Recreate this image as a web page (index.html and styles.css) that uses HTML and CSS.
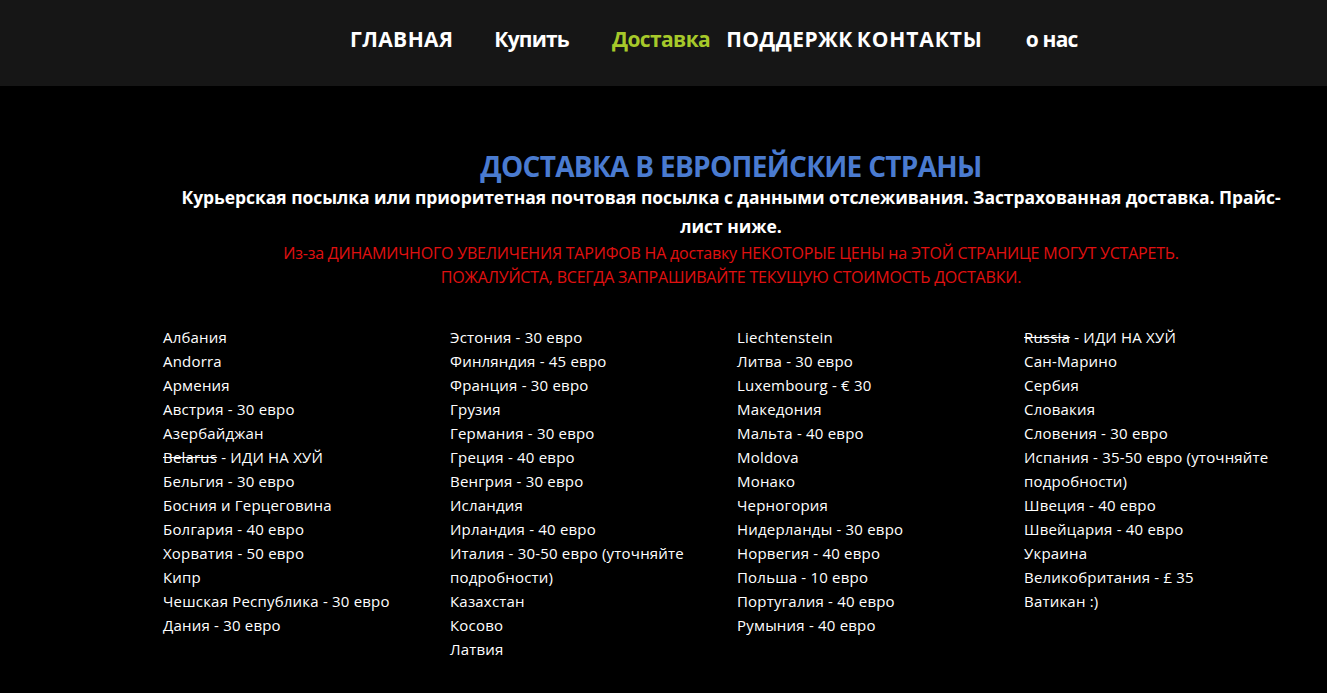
FILE: index.html
```html
<!DOCTYPE html>
<html lang="ru">
<head>
<meta charset="utf-8">
<title>Доставка</title>
<link rel="stylesheet" href="styles.css">
</head>
<body>
<header class="topbar">
  <nav class="menu">
    <a class="menu-link caps first" href="#">ГЛАВНАЯ</a>
    <a class="menu-link" href="#">Купить</a>
    <a class="menu-link is-active" href="#">Доставка</a>
    <a class="menu-link caps tight" href="#">ПОДДЕРЖК</a>
    <a class="menu-link caps tight" href="#">КОНТАКТЫ</a>
    <a class="menu-link" href="#">о нас</a>
  </nav>
</header>

<main class="content">
  <section class="intro">
    <h1 class="title">ДОСТАВКА В ЕВРОПЕЙСКИЕ СТРАНЫ</h1>
    <p class="lead">Курьерская посылка или приоритетная почтовая посылка с данными отслеживания. Застрахованная доставка. Прайс-лист ниже.</p>
    <p class="warning">Из-за ДИНАМИЧНОГО УВЕЛИЧЕНИЯ ТАРИФОВ НА доставку НЕКОТОРЫЕ ЦЕНЫ на ЭТОЙ СТРАНИЦЕ МОГУТ УСТАРЕТЬ.<br>ПОЖАЛУЙСТА, ВСЕГДА ЗАПРАШИВАЙТЕ ТЕКУЩУЮ СТОИМОСТЬ ДОСТАВКИ.</p>
  </section>

  <section class="countries">
    <ul class="col">
      <li>Албания</li>
      <li>Andorra</li>
      <li>Армения</li>
      <li>Австрия - 30 евро</li>
      <li>Азербайджан</li>
      <li><s>Belarus</s> - ИДИ НА ХУЙ</li>
      <li>Бельгия - 30 евро</li>
      <li>Босния и Герцеговина</li>
      <li>Болгария - 40 евро</li>
      <li>Хорватия - 50 евро</li>
      <li>Кипр</li>
      <li>Чешская Республика - 30 евро</li>
      <li>Дания - 30 евро</li>
    </ul>
    <ul class="col">
      <li>Эстония - 30 евро</li>
      <li>Финляндия - 45 евро</li>
      <li>Франция - 30 евро</li>
      <li>Грузия</li>
      <li>Германия - 30 евро</li>
      <li>Греция - 40 евро</li>
      <li>Венгрия - 30 евро</li>
      <li>Исландия</li>
      <li>Ирландия - 40 евро</li>
      <li>Италия - 30-50 евро (уточняйте подробности)</li>
      <li>Казахстан</li>
      <li>Косово</li>
      <li>Латвия</li>
    </ul>
    <ul class="col">
      <li>Liechtenstein</li>
      <li>Литва - 30 евро</li>
      <li>Luxembourg - € 30</li>
      <li>Македония</li>
      <li>Мальта - 40 евро</li>
      <li>Moldova</li>
      <li>Монако</li>
      <li>Черногория</li>
      <li>Нидерланды - 30 евро</li>
      <li>Норвегия - 40 евро</li>
      <li>Польша - 10 евро</li>
      <li>Португалия - 40 евро</li>
      <li>Румыния - 40 евро</li>
    </ul>
    <ul class="col">
      <li><s>Russia</s> - ИДИ НА ХУЙ</li>
      <li>Сан-Марино</li>
      <li>Сербия</li>
      <li>Словакия</li>
      <li>Словения - 30 евро</li>
      <li>Испания - 35-50 евро (уточняйте подробности)</li>
      <li>Швеция - 40 евро</li>
      <li>Швейцария - 40 евро</li>
      <li>Украина</li>
      <li>Великобритания - £ 35</li>
      <li>Ватикан :)</li>
    </ul>
  </section>
</main>
</body>
</html>
```

FILE: styles.css
```css
html, body {
  margin: 0;
  padding: 0;
}

body {
  background: #000;
  color: #fff;
  font-family: "Open Sans", "Noto Sans", sans-serif;
}

/* top navigation bar */
.topbar {
  background: #161616;
  height: 86px;
  display: flex;
  align-items: center;
}

.menu {
  display: flex;
  align-items: center;
  padding-left: 350px;
  margin-top: -9px;
}

.menu-link {
  color: #fff;
  text-decoration: none;
  font-weight: 700;
  font-size: 21px;
  letter-spacing: -0.8px;
  margin-right: 43px;
}

.menu-link.caps {
  letter-spacing: 0.4px;
}

.menu-link.first {
  margin-right: 41px;
}

.menu-link.is-active {
  color: #a6c92a;
  letter-spacing: -0.6px;
  margin-right: 16px;
}

.menu-link.tight {
  margin-right: 4px;
}

.menu-link.tight + .menu-link.tight {
  letter-spacing: 0.9px;
  margin-right: 43px;
}

/* intro block */
.intro {
  width: 1120px;
  margin: 0 0 0 171px;
  padding-top: 63px;
  text-align: center;
}

.title {
  margin: 0;
  color: #4a7bd0;
  font-size: 28px;
  font-weight: 700;
  line-height: 34px;
  letter-spacing: -0.7px;
}

.lead {
  margin: 0;
  font-size: 17.5px;
  font-weight: 700;
  line-height: 29px;
  letter-spacing: -0.05px;
}

.warning {
  margin: 0;
  color: #e01010;
  font-size: 16px;
  line-height: 24px;
  letter-spacing: -0.2px;
}

/* country price list */
.countries {
  display: grid;
  grid-template-columns: repeat(4, 287px);
  padding-left: 163px;
  margin-top: 36px;
}

.col {
  list-style: none;
  margin: 0;
  padding: 0 20px 0 0;
  font-size: 15px;
  line-height: 24px;
  letter-spacing: 0.2px;
}

.col s {
  text-decoration-thickness: 1px;
}
```
